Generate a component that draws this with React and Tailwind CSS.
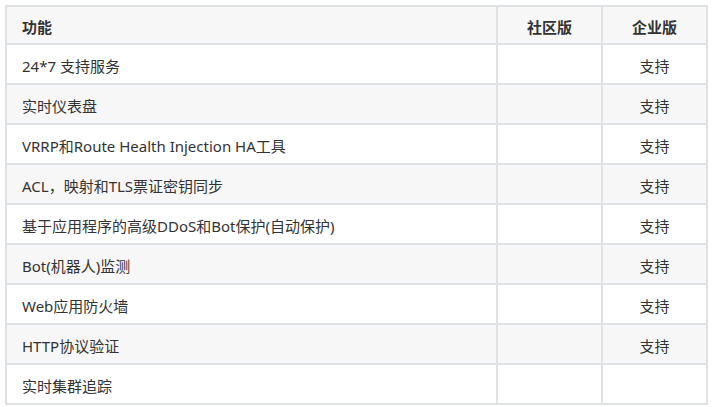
import React from "react";

const rows = [
  ["24*7 支持服务", "", "支持"],
  ["实时仪表盘", "", "支持"],
  ["VRRP和Route Health Injection HA工具", "", "支持"],
  ["ACL，映射和TLS票证密钥同步", "", "支持"],
  ["基于应用程序的高级DDoS和Bot保护(自动保护)", "", "支持"],
  ["Bot(机器人)监测", "", "支持"],
  ["Web应用防火墙", "", "支持"],
  ["HTTP协议验证", "", "支持"],
  ["实时集群追踪", "", ""],
];

export default function App() {
  return (
    <div
      className="min-h-screen bg-white pl-[5px] pt-[5px] text-[15px] leading-[20px] text-[#333]"
      style={{ fontFamily: '"Noto Sans", "Noto Sans CJK SC", sans-serif' }}
    >
      <table className="w-[701px] table-fixed border-collapse">
        <colgroup>
          <col className="w-[491px]" />
          <col className="w-[105px]" />
          <col className="w-[105px]" />
        </colgroup>
        <thead>
          <tr className="bg-[#f7f7f7]">
            <th className="h-[38px] border-2 border-[#dfe2e5] pt-[3px] pb-0 px-[15px] text-left font-bold">功能</th>
            <th className="h-[38px] border-2 border-[#dfe2e5] pt-[3px] pb-0 px-[15px] text-center font-bold">社区版</th>
            <th className="h-[38px] border-2 border-[#dfe2e5] pt-[3px] pb-0 px-[15px] text-center font-bold">企业版</th>
          </tr>
        </thead>
        <tbody>
          {rows.map((row, i) => (
            <tr key={i} className={i % 2 === 1 ? "bg-[#f7f7f7]" : "bg-white"}>
              <td className="h-[40px] border-2 border-[#dfe2e5] pt-[4px] pb-0 px-[15px] text-left">{row[0]}</td>
              <td className="h-[40px] border-2 border-[#dfe2e5] pt-[4px] pb-0 px-[15px] text-center">{row[1]}</td>
              <td className="h-[40px] border-2 border-[#dfe2e5] pt-[4px] pb-0 px-[15px] text-center">{row[2]}</td>
            </tr>
          ))}
        </tbody>
      </table>
    </div>
  );
}
